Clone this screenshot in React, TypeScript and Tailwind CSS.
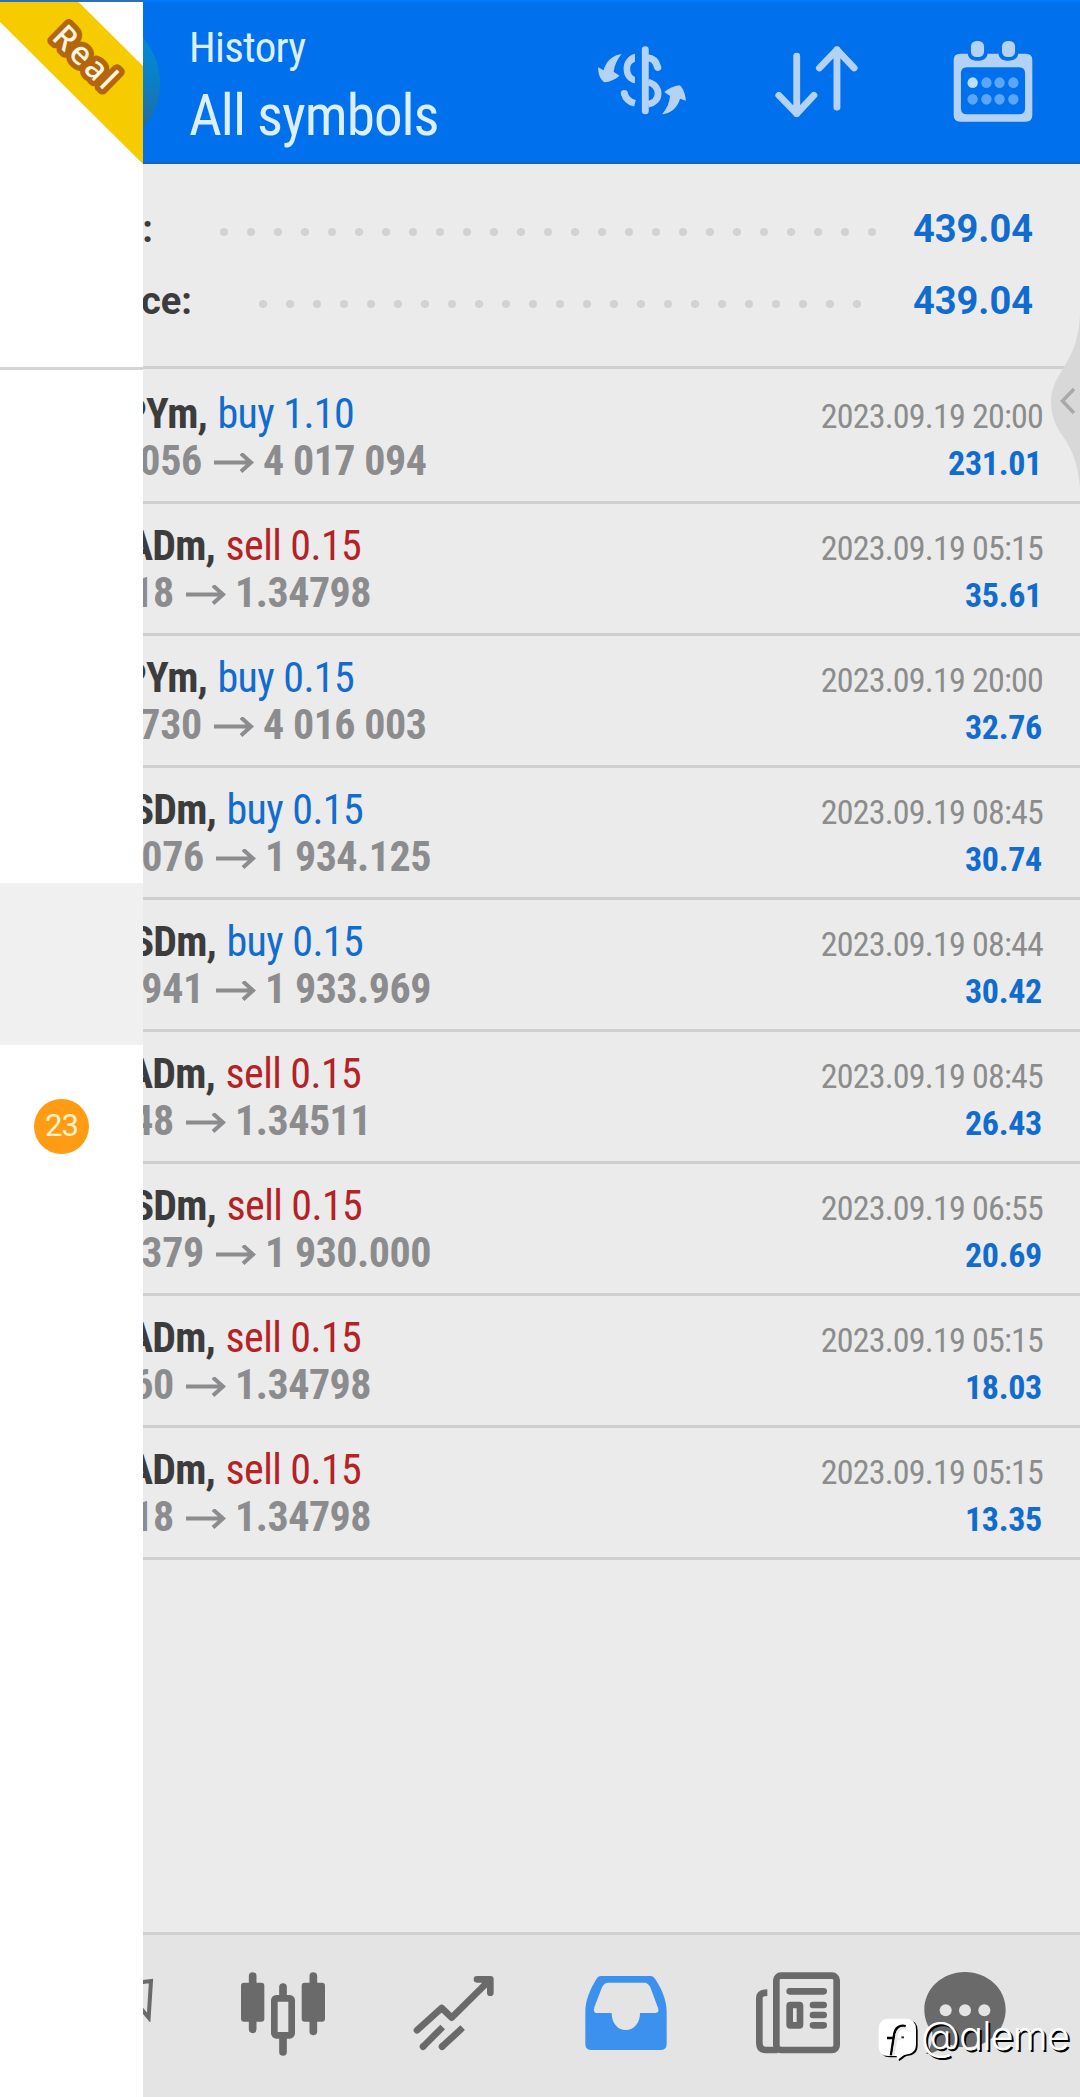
import React from "react";

const COND = "font-['Roboto_Condensed','Roboto','Liberation_Sans_Narrow',sans-serif] [font-stretch:75%]";

type Side = "buy" | "sell";
type Deal = {
  symbol: string;
  symbolWidth: string;
  side: Side;
  volume: string;
  from: string;
  fromWidth: string;
  to: string;
  date: string;
  profit: string;
};

const JPY = "w-[75px]";
const CAD = "w-[83px]";
const USD = "w-[84px]";
const W_SHORT = "w-[31px]";
const W_YEN = "w-[59px]";
const W_GOLD = "w-[61px]";

const deals: Deal[] = [
  { symbol: "PYm,", symbolWidth: JPY, side: "buy", volume: "1.10", from: "056", fromWidth: W_YEN, to: "4 017 094", date: "2023.09.19 20:00", profit: "231.01" },
  { symbol: "ADm,", symbolWidth: CAD, side: "sell", volume: "0.15", from: "18", fromWidth: W_SHORT, to: "1.34798", date: "2023.09.19 05:15", profit: "35.61" },
  { symbol: "PYm,", symbolWidth: JPY, side: "buy", volume: "0.15", from: "730", fromWidth: W_YEN, to: "4 016 003", date: "2023.09.19 20:00", profit: "32.76" },
  { symbol: "SDm,", symbolWidth: USD, side: "buy", volume: "0.15", from: "076", fromWidth: W_GOLD, to: "1 934.125", date: "2023.09.19 08:45", profit: "30.74" },
  { symbol: "SDm,", symbolWidth: USD, side: "buy", volume: "0.15", from: "941", fromWidth: W_GOLD, to: "1 933.969", date: "2023.09.19 08:44", profit: "30.42" },
  { symbol: "ADm,", symbolWidth: CAD, side: "sell", volume: "0.15", from: "48", fromWidth: W_SHORT, to: "1.34511", date: "2023.09.19 08:45", profit: "26.43" },
  { symbol: "SDm,", symbolWidth: USD, side: "sell", volume: "0.15", from: "379", fromWidth: W_GOLD, to: "1 930.000", date: "2023.09.19 06:55", profit: "20.69" },
  { symbol: "ADm,", symbolWidth: CAD, side: "sell", volume: "0.15", from: "60", fromWidth: W_SHORT, to: "1.34798", date: "2023.09.19 05:15", profit: "18.03" },
  { symbol: "ADm,", symbolWidth: CAD, side: "sell", volume: "0.15", from: "18", fromWidth: W_SHORT, to: "1.34798", date: "2023.09.19 05:15", profit: "13.35" },
];

function CurrencyIcon() {
  return (
    <svg className="h-[80px] w-[93px]" viewBox="160 125 270 240" preserveAspectRatio="none" fill="none">
      <path d="M306 151V335" stroke="#b3d2f5" strokeWidth="20" strokeLinecap="round" />
      <path d="M276 163C256 168 243 186 243 208C243 232 256 247 276 252V233C266 228 262 219 262 208C262 198 266 191 276 187Z" fill="#b3d2f5" />
      <path d="M312 175C328 176 337 184 342 204" stroke="#b3d2f5" strokeWidth="21" strokeLinecap="round" />
      <path d="M245 282C249 298 259 308 276 312" stroke="#b3d2f5" strokeWidth="20" />
      <circle cx="245" cy="282" r="10" fill="#b3d2f5" />
      <path d="M314 249C332 253 343 266 343 283C343 299 332 311 314 315" stroke="#b3d2f5" strokeWidth="20" />
      <path d="M237 164C210 168 192 186 185 213L169 204C169 225 175 239 187 249C204 247 218 241 231 229L214 217C217 198 224 181 237 164Z" fill="#b3d2f5" />
      <path d="M355 345C382 341 399 325 407 298L424 304C422 283 416 267 406 258C389 260 374 267 361 278L378 290C376 310 369 327 355 345Z" fill="#b3d2f5" />
    </svg>
  );
}

function SortIcon() {
  return (
    <svg className="h-[80px] w-[86px]" viewBox="680 125 250 240" preserveAspectRatio="none" fill="none" stroke="#b3d2f5" strokeWidth="20" strokeLinecap="round" strokeLinejoin="round">
      <path d="M746 170V343M694 288L746 343L796 288" />
      <path d="M863 324V151M812 206L863 151L913 206" />
    </svg>
  );
}

function CalendarIcon() {
  return (
    <svg className="h-[83px] w-[80px]" viewBox="1198 120 232 249" preserveAspectRatio="none">
      <path fillRule="evenodd" fill="#b3d2f5" d="M1219 161H1241C1242 174 1252 182 1269 182C1287 182 1297 174 1298 161H1330C1331 174 1341 182 1359 182C1376 182 1386 174 1387 161H1409Q1428 161 1428 180V346Q1428 365 1409 365H1219Q1200 365 1200 346V180Q1200 161 1219 161ZM1238 202Q1221 202 1221 220V325Q1221 343 1238 343H1390Q1407 343 1407 325V220Q1407 202 1390 202Z" />
      <rect x="1250" y="123" width="38" height="48" rx="16" fill="#b3d2f5" />
      <rect x="1340" y="123" width="38" height="48" rx="16" fill="#b3d2f5" />
      {[248, 298].map((cy) =>
        [1255, 1295, 1333, 1373].map((cx) => (
          <ellipse key={`${cx}-${cy}`} cx={cx} cy={cy} rx="15" ry="16" fill={cx === 1255 && cy === 248 ? "#b9e0ff" : "#5ca6f8"} />
        ))
      )}
    </svg>
  );
}

function Header() {
  return (
    <header className="relative flex h-[164px] items-start border-t-2 border-b-2 border-t-[#0078ff] border-b-[#1763b4] bg-[#0070ec]">
      <div className="absolute top-[34px] left-0 h-[94px] w-[17px] overflow-hidden">
        <div className="absolute top-[-21px] right-0 size-[136px] rounded-full bg-linear-to-b from-[#008fe0] via-[#0a7fc4] to-[#23608f]" />
      </div>
      <div className={`${COND} ml-[46px] mt-[23px] w-[400px] whitespace-nowrap text-[#dcefff]`}>
        <div className="text-[43px] leading-[44px] tracking-[-0.7px]">History</div>
        <div className="mt-[14px] text-[57px] leading-[66px] tracking-[-1px]">All symbols</div>
      </div>
      <div className="mt-[39px] ml-[6px]"><CurrencyIcon /></div>
      <div className="mt-[39px] ml-[86px]"><SortIcon /></div>
      <div className="mt-[38px] ml-[92.500px]"><CalendarIcon /></div>
    </header>
  );
}

function SummaryRow({ label, width, dots, gap }: { label: string; width: string; dots: number; gap: string }) {
  return (
    <div className="flex h-[72px] items-center font-['Roboto',sans-serif] text-[38px] leading-[72px] font-bold">
      <div className={`${width} flex shrink-0 justify-end overflow-hidden text-[#3c3c3c]`}>{label}</div>
      <div className={`${gap} flex gap-[19px] pt-[5px]`}>
        {Array.from({ length: dots }, (_, i) => (
          <span key={i} className="size-[8px] rounded-full bg-[#d2d2d2]" />
        ))}
      </div>
      <div className="mr-[47px] ml-auto text-[#106cce]">439.04</div>
    </div>
  );
}

function Arrow() {
  return (
    <svg className="mr-[9px] ml-[12px] h-[22px] w-[40px] shrink-0" viewBox="0 0 40 22" fill="none" stroke="#8c8c8e" strokeWidth="4">
      <path d="M0 9.500H37M27 0.500L37 9.500L27 18.500" />
    </svg>
  );
}

function DealRow({ deal, first }: { deal: Deal; first: boolean }) {
  return (
    <div className={`${COND} ${first ? "h-[135px] pt-[21px]" : "h-[132px] pt-[18px]"} border-b-3 border-[#cfcfcf] pr-[38px] text-[42px] leading-[47px] whitespace-nowrap`}>
      <div className="flex h-[47px] items-baseline">
        <div className={`${deal.symbolWidth} flex h-[47px] shrink-0 justify-end pr-[11px] font-bold tracking-[-0.8px] text-[#3c3c3c]`}>{deal.symbol}</div>
        <div className={`${deal.side === "buy" ? "text-[#106cce]" : "text-[#b42226]"} ml-[-0.5px] tracking-[-0.6px]`}>
          {deal.side} {deal.volume}
        </div>
        <div className="mr-[-1px] ml-auto text-[34px] tracking-[-0.8px] text-[#8c8c8c]">{deal.date}</div>
      </div>
      <div className="flex h-[47px] items-baseline font-bold text-[#8c8c8e]">
        <div className={`${deal.fromWidth} flex shrink-0 justify-end tracking-[-0.3px]`}>{deal.from}</div>
        <Arrow />
        <div className="tracking-[-0.5px]">{deal.to}</div>
        <div className="ml-auto text-[34px] tracking-[-0.3px] text-[#106cce]">{deal.profit}</div>
      </div>
    </div>
  );
}

function BottomNav() {
  return (
    <nav className="flex h-[165px] items-start border-t-3 border-[#cfcfcf] bg-[#e4e4e4]">
      <svg className="mt-[43px] h-[44px] w-[12px]" viewBox="39 174 36 132" fill="none" stroke="#6a6a6a" strokeWidth="12">
        <path d="M30 187L63 183L56 293L30 262" />
      </svg>
      <svg className="mt-[35px] ml-[84px] h-[90px] w-[88px]" viewBox="327 150 264 270" fill="none" stroke="#6a6a6a">
        <path strokeWidth="23" strokeLinecap="round" d="M368 168V328M550 168V334M459 201V230M459 355V396" />
        <rect x="333" y="188" width="70" height="117" rx="9" fill="#6a6a6a" stroke="none" />
        <rect x="515" y="188" width="70" height="117" rx="9" fill="#6a6a6a" stroke="none" />
        <rect x="433" y="235" width="52" height="111" rx="6" strokeWidth="20" fill="#e4e4e4" />
      </svg>
      <svg className="mt-[37px] ml-[85px] h-[80px] w-[84px]" viewBox="846 156 252 240" fill="none" stroke="#6a6a6a" strokeWidth="20" strokeLinecap="round" strokeLinejoin="round">
        <path d="M861 331L935 264L965 293L1078 181M1041 178H1081V218" />
        <path strokeLinecap="butt" d="M878 381L938 321M935 381L998 323" />
        <path d="M879 380L880 379M936 380L937 379" />
      </svg>
      <svg className="mt-[38px] ml-[88px] h-[78px] w-[84px]" viewBox="162 159 252 234">
        <path fillRule="evenodd" fill="#3d91ee" d="M213 168H361Q371 168 378 181C395 208 410 240 410 275V371Q410 390 391 390H185Q166 390 166 371V275C166 240 181 208 197 181Q203 168 213 168ZM235 188Q222 188 216 202L193 262Q188 279 202 279H245C245 308 262 330 287 330C313 330 330 308 330 279H375Q389 279 384 264L361 202Q355 188 343 188Z" />
      </svg>
      <svg className="mt-[35px] ml-[87px] h-[84px] w-[86px]" viewBox="677 150 258 252" fill="none" stroke="#6a6a6a" strokeWidth="20">
        <rect x="741" y="167" width="181" height="223" rx="14" />
        <path d="M714 218C698 218 690 223 690 235V368Q690 390 709 390H745" />
        <path strokeLinecap="round" d="M781 214H883M851 255H883M851 285H883M851 316H883" />
        <rect x="781" y="255" width="31" height="61" rx="2" />
      </svg>
      <svg className="mt-[35px] ml-[82px] h-[90px] w-[84px]" viewBox="249 150 252 270">
        <path fill="#6a6a6a" d="M375 156C443 156 497 206 497 269C497 332 443 382 375 382C355 382 336 378 320 370C304 386 282 402 257 402C272 387 278 365 277 337C262 318 253 295 253 269C253 206 307 156 375 156Z" />
        <g fill="#e4e4e4">
          <circle cx="317" cy="271" r="18" />
          <circle cx="375" cy="271" r="18" />
          <circle cx="433" cy="271" r="18" />
        </g>
      </svg>
    </nav>
  );
}

function Drawer() {
  return (
    <aside className="flex w-[143px] shrink-0 flex-col overflow-hidden bg-white">
      <div className="h-[370px] border-t-2 border-b-3 border-t-[#2f70b4] border-b-[#d4d4d4]">
        <svg className="block h-[163px] w-[143px]" viewBox="0 2 143 163">
          <path d="M0 2H78.500L143 66V164L0 22Z" fill="#f6cb00" />
          <text
            className="font-['Noto_Sans',sans-serif] text-[32px] font-medium tracking-[3.2px] [paint-order:stroke]"
            transform="translate(50.5 38.5) rotate(44.5)"
            fill="#fff6e0"
            stroke="#b4660c"
            strokeWidth="10.500"
            strokeLinejoin="round"
          >
            Real
          </text>
        </svg>
      </div>
      <div className="mt-[513px] h-[162px] bg-[#f0f0f0]" />
      <div className="mt-[54px] ml-[34px] flex size-[55px] items-center justify-center rounded-full bg-[#ff9c14] font-['Roboto',sans-serif] text-[31px] tracking-[-1px] text-[#fff3cf]">
        23
      </div>
    </aside>
  );
}

function Watermark() {
  return (
    <div className="absolute top-[2008px] left-[876px] flex items-start">
      <svg className="mt-[8px] h-[50px] w-[44px]" viewBox="108 288 132 150" fill="none">
        <path transform="translate(5 4)" fill="#000" d="M145 296H198Q228 296 228 328V372C228 392 218 402 196 404C188 406 184 412 172 420L170 408H145Q116 408 116 378V328Q116 296 145 296Z" />
        <path fill="#fff" d="M145 296H198Q228 296 228 328V372C228 392 218 402 196 404C188 406 184 412 172 420L170 408H145Q116 408 116 378V328Q116 296 145 296Z" />
        <path d="M197 319C178 314 166 324 163 342L153 406M141 354H164" stroke="#000" strokeWidth="8" />
        <path d="M199 326C184 320 173 328 170 344L160 407M170 357H182" stroke="#e9e9e9" strokeWidth="8" />
        <path d="M184 352H192" stroke="#333" strokeWidth="6" />
      </svg>
      <div className="ml-[1px] font-['Inter',sans-serif] text-[40px] leading-[56px] font-light tracking-[-0.9px] text-white [font-feature-settings:'cv11'] [text-shadow:2px_2px_0_#000]">@aleme</div>
    </div>
  );
}

export default function App() {
  return (
    <div className="relative flex h-[2097px] w-[1080px] overflow-hidden bg-[#ebebeb]">
      <Drawer />
      <main className="flex w-[937px] flex-col overflow-hidden">
        <Header />
        <section className="h-[205px] border-b-3 border-[#cfcfcf] pt-[29px]">
          <SummaryRow label=":" width="w-[10px]" dots={25} gap="ml-[67px]" />
          <SummaryRow label="ce:" width="w-[49px]" dots={23} gap="ml-[67px]" />
        </section>
        <section className="grow">
          {deals.map((deal, i) => (
            <DealRow key={i} deal={deal} first={i === 0} />
          ))}
        </section>
        <BottomNav />
      </main>
      <svg className="absolute top-[310px] right-0 h-[182px] w-[30px]" viewBox="1050 310 30 182" fill="none">
        <path fill="#d8d8d8" d="M1080 313C1079 340 1073 352 1064 367C1056 380 1051 389 1051 401C1051 416 1056 427 1064 438C1073 452 1078 464 1080 488Z" />
        <path d="M1074 389L1062.500 401L1074 413" stroke="#a9a9a9" strokeWidth="3.500" />
      </svg>
      <Watermark />
    </div>
  );
}
